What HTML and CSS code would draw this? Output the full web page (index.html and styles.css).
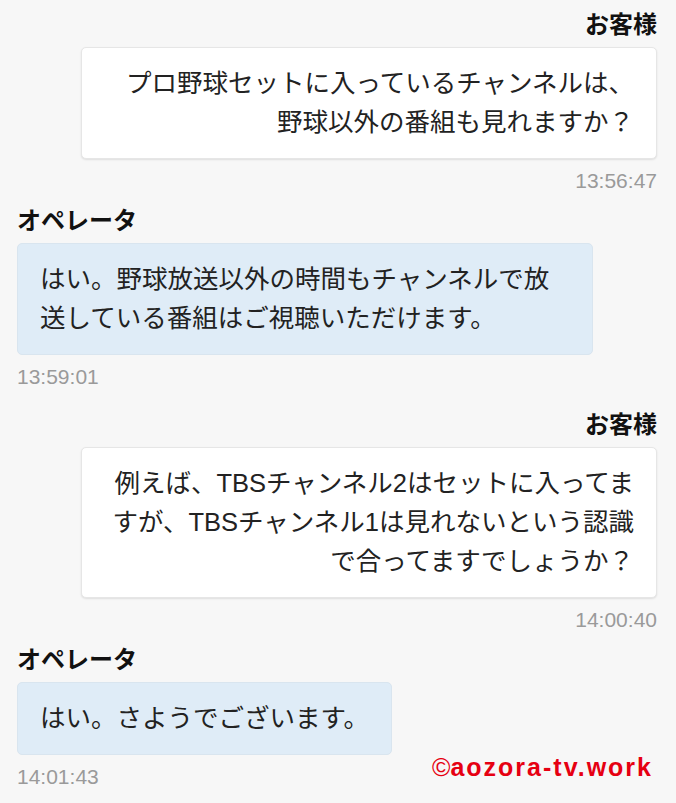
FILE: index.html
```html
<!DOCTYPE html>
<html lang="ja">
<head>
    <meta charset="UTF-8">
    <meta name="viewport" content="width=device-width, initial-scale=1.0">
    <title>チャット履歴</title>
    <link rel="stylesheet" href="styles.css">
</head>
<body>

    <div class="chat">
        <!-- お客様の質問 -->
        <div class="msg msg-customer">
            <div class="msg-name">お客様</div>
            <div class="bubble">プロ野球セットに入っているチャンネルは、野球以外の番組も見れますか？</div>
            <div class="msg-time">13:56:47</div>
        </div>

        <div class="msg msg-operator">
            <div class="msg-name">オペレータ</div>
            <div class="bubble">はい。野球放送以外の時間もチャンネルで放送している番組はご視聴いただけます。</div>
            <div class="msg-time">13:59:01</div>
        </div>

        <div class="msg msg-customer">
            <div class="msg-name">お客様</div>
            <div class="bubble">例えば、TBSチャンネル2はセットに入ってますが、TBSチャンネル1は見れないという認識で合ってますでしょうか？</div>
            <div class="msg-time">14:00:40</div>
        </div>

        <div class="msg msg-operator">
            <div class="msg-name">オペレータ</div>
            <div class="bubble">はい。さようでございます。</div>
            <div class="msg-time">14:01:43</div>
        </div>
    </div>

    <!-- watermark -->
    <div class="credit"><span class="credit-mark">©</span>aozora-tv.work</div>

</body>
</html>
```

FILE: styles.css
```css
body {
    font-family: 'Liberation Sans', 'Noto Sans CJK JP', sans-serif;
    background-color: #f7f7f7;
    color: #222;
    margin: 0;
    padding: 10px 19px 0 17px;
    position: relative;
    min-height: 793px;
}

.chat {
    display: flex;
    flex-direction: column;
}

.msg {
    display: flex;
    flex-direction: column;
    margin-bottom: 13px;
}

.msg-operator {
    align-items: flex-start;
    margin-bottom: 21px;
}

.msg-customer {
    align-items: flex-end;
}

.msg-name {
    font-size: 24px;
    font-weight: bold;
    line-height: 30px;
    color: #111;
}

.bubble {
    max-width: 90%;
    box-sizing: border-box;
    margin-top: 7px;
    padding: 16px 22px;
    font-size: 25.5px;
    line-height: 39px;
    text-spacing-trim: space-all;
    border-radius: 5px;
    border: 1px solid transparent;
}

.msg-customer .bubble {
    width: 90%;
    text-align: right;
    background-color: #fff;
    border-color: #e6e6e6;
    box-shadow: 0 1px 2px rgba(0, 0, 0, 0.1);
}

.msg-operator .bubble {
    background-color: #dfecf7;
    border-color: #d9e5ef;
}

.msg-time {
    margin-top: 10px;
    font-size: 21px;
    line-height: 24px;
    color: #9a9a9a;
}

.credit {
    position: absolute;
    right: 23px;
    top: 753px;
    font-family: 'Liberation Sans', sans-serif;
    font-size: 25px;
    font-weight: bold;
    letter-spacing: 2px;
    color: #e60012;
}

.credit-mark {
    font-weight: normal;
    letter-spacing: 0;
}
```
